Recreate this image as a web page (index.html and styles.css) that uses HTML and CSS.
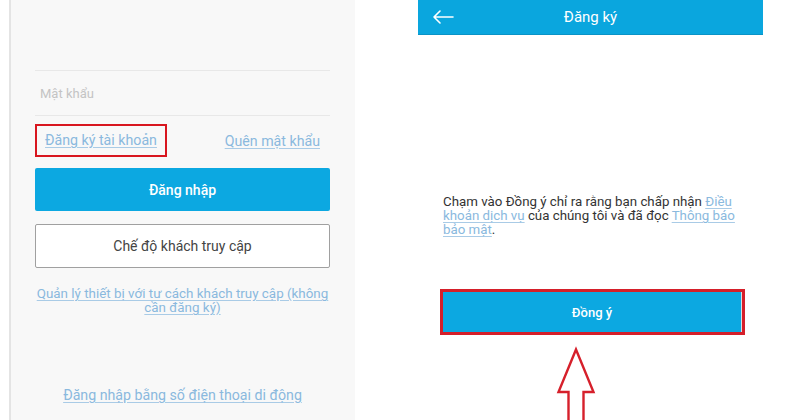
FILE: index.html
```html
<!DOCTYPE html>
<html lang="vi">
<head>
  <meta charset="UTF-8" />
  <title>Đăng ký</title>
  <link rel="stylesheet" href="styles.css">
</head>
<body>

  <div class="screens">

    <!-- Login screen -->
    <div class="login">
      <div class="field">
        <span class="placeholder">Mật khẩu</span>
      </div>

      <div class="link-row">
        <a href="#" class="link marked">Đăng ký tài khoản</a>
        <a href="#" class="link forgot">Quên mật khẩu</a>
      </div>

      <button class="btn-primary">Đăng nhập</button>
      <button class="btn-outline">Chế độ khách truy cập</button>

      <a href="#" class="link guest">Quản lý thiết bị với tư cách khách truy cập (không cần đăng ký)</a>

      <a href="#" class="link phone">Đăng nhập bằng số điện thoại di động</a>
    </div>

    <!-- Register screen -->
    <div class="register">
      <div class="topbar">
        <svg class="back" width="22" height="14" viewBox="0 0 22 14">
          <path d="M21 7H2M8 1L2 7l6 6" fill="none" stroke="#fff" stroke-width="1.6" stroke-linecap="round" stroke-linejoin="round"/>
        </svg>
        <span class="topbar-title">Đăng ký</span>
      </div>

      <p class="terms">
        Chạm vào Đồng ý chỉ ra rằng bạn chấp nhận <a href="#" class="link">Điều khoản dịch vụ</a> của chúng tôi và đã đọc <a href="#" class="link">Thông báo bảo mật</a>.
      </p>

      <div class="agree-box">
        <button class="btn-agree">Đồng ý</button>
      </div>

      <svg class="pointer" width="40" height="72" viewBox="0 0 40 72">
        <path d="M19 1.5L36.5 44H26.5V74H11.5V44H1.5Z" fill="#fff" stroke="#d6202b" stroke-width="2.4" stroke-linejoin="miter"/>
      </svg>
    </div>

  </div>

</body>
</html>
```

FILE: styles.css
```css
* {
  box-sizing: border-box;
}

body {
  margin: 0;
  background: #fff;
  font-family: Roboto, "Noto Sans", sans-serif;
  color: #333;
  overflow: hidden;
}

.screens {
  display: flex;
  height: 420px;
}

a {
  text-decoration: underline;
}

.link {
  color: #8ab9de;
  text-decoration-color: #a9cbe6;
  text-underline-offset: 2px;
}

/* Login */
.login {
  width: 346px;
  margin-left: 9px;
  height: 420px;
  background: #f8f8f8;
  border-left: 2px solid #e4e4e4;
  padding: 70px 25px 0 24px;
  display: flex;
  flex-direction: column;
}

.field {
  height: 46px;
  border-top: 1px solid #e8e8e8;
  border-bottom: 1px solid #e8e8e8;
  display: flex;
  align-items: center;
  padding-left: 5px;
}

.placeholder {
  font-size: 13px;
  color: #c4c4c4;
}

.link-row {
  display: flex;
  justify-content: space-between;
  align-items: center;
  margin-top: 8px;
  font-size: 14.2px;
}

.marked {
  border: 2px solid #d8161f;
  padding: 6px 8px;
  line-height: 17px;
}

.forgot {
  margin-right: 10px;
}

.btn-primary {
  margin-top: 11px;
  height: 43px;
  border: none;
  border-radius: 2px;
  background: #0ca8e1;
  color: #fff;
  font-family: inherit;
  font-size: 14px;
  font-weight: 500;
}

.btn-outline {
  margin-top: 13px;
  height: 44px;
  border: 1px solid #a0a0a0;
  border-radius: 2px;
  background: #fff;
  color: #444;
  font-family: inherit;
  font-size: 14px;
}

.guest {
  margin-top: 19px;
  text-align: center;
  font-size: 13.4px;
  line-height: 14px;
}

.phone {
  margin-top: 72px;
  text-align: center;
  font-size: 14.2px;
}

/* Register */
.register {
  width: 345px;
  margin-left: 63px;
  display: flex;
  flex-direction: column;
}

.topbar {
  height: 35px;
  background: #0aa6de;
  border-bottom: 1px solid #0a93c6;
  display: flex;
  align-items: center;
  justify-content: center;
  position: relative;
}

.back {
  position: absolute;
  left: 14px;
  top: 10px;
}

.topbar-title {
  color: #fff;
  font-size: 15px;
}

.terms {
  margin: 160px 0 0 25px;
  width: 300px;
  font-size: 13.3px;
  line-height: 14px;
}

.agree-box {
  margin: 52px 0 0 22px;
  width: 305px;
  height: 46px;
  border: 3px solid #d51f2a;
  background: #dcdcdc;
  padding: 0 1px 0 0;
}

.btn-agree {
  width: 100%;
  height: 100%;
  border: none;
  background: #0ca8e1;
  color: #fff;
  font-family: inherit;
  font-size: 13px;
  font-weight: 500;
}

.pointer {
  margin: 13px 0 0 139px;
  overflow: visible;
}
```
